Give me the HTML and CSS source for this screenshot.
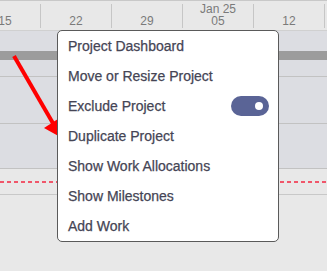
FILE: index.html
```html
<!DOCTYPE html>
<html>
<head>
<title>Timeline menu</title>
<link rel="stylesheet" href="styles.css">
</head>
<body>
<div class="timeline">
	<div class="header">
		<div class="cols">
			<div class="col"><span class="day">15</span></div>
			<div class="col"><span class="day">22</span></div>
			<div class="col"><span class="day">29</span></div>
			<div class="col"><span class="month">Jan 25</span><span class="day">05</span></div>
			<div class="col"><span class="day">12</span></div>
		</div>
	</div>
	<div class="band"></div>
	<div class="bar"></div>
	<div class="row row-a"></div>
	<div class="row row-b"></div>
	<div class="row row-c"></div>
	<div class="today"><div class="dash"></div></div>
	<div class="rest"></div>

	<svg class="arrow" width="80" height="150" viewBox="0 0 80 150">
		<line x1="14" y1="56" x2="54" y2="125" stroke="#ff0000" stroke-width="4"/>
		<polygon points="44,128 61,117 62,138" fill="#ff0000"/>
	</svg>

	<div class="menu">
		<div class="item">Project Dashboard</div>
		<div class="item">Move or Resize Project</div>
		<div class="item">Exclude Project <span class="toggle"><span class="knob"></span></span></div>
		<div class="item">Duplicate Project</div>
		<div class="item">Show Work Allocations</div>
		<div class="item">Show Milestones</div>
		<div class="item">Add Work</div>
	</div>
</div>
</body>
</html>
```

FILE: styles.css
```css
body{margin:0;background-color:#e8e8e8;font-family:"Liberation Sans",Arial,sans-serif;overflow:hidden;}

.timeline{position:relative;width:327px;height:271px;overflow:hidden;}

.header{height:24px;padding:3px 0 2px;background-color:#e8e8e8;border-top:1px solid #c8c8c8;border-bottom:1px solid #d0d0d0;}
.cols{display:flex;margin-left:-30px;height:24px;}
.col{flex:0 0 71px;border-right:1px solid #c6c6c6;display:flex;flex-direction:column;justify-content:flex-end;align-items:center;padding-bottom:1px;box-sizing:border-box;height:24px;}
.day,.month{font-size:12px;line-height:12px;color:#7a7a7a;}

.band{height:20px;background-color:#dcdde2;}
.bar{height:9px;background-color:#9c9c9c;}
.row{background-color:#dcdde2;border-bottom:1px solid #c2c2c2;}
.row-a{height:16px;}
.row-b{height:46px;}
.row-c{height:44px;}
.today{height:25px;border-bottom:1px solid #c8c8c8;display:flex;align-items:center;}
.dash{width:100%;height:2px;background:repeating-linear-gradient(90deg,#f0566a 0 4px,transparent 4px 7px);}
.rest{height:80px;}

.arrow{position:absolute;left:0;top:0;}

.menu{position:absolute;left:57px;top:30px;width:220px;background-color:#ffffff;border:1px solid #5a5a5a;border-radius:5px;}
.item{height:30px;padding-left:10px;display:flex;align-items:center;font-size:14px;color:#454555;-webkit-text-stroke:0.25px #454555;}
.toggle{margin-left:auto;margin-right:9px;width:38px;height:20px;border-radius:10px;background-color:#5a6496;position:relative;}
.knob{position:absolute;right:6px;top:6px;width:8px;height:8px;border-radius:50%;background-color:#ffffff;}
```
